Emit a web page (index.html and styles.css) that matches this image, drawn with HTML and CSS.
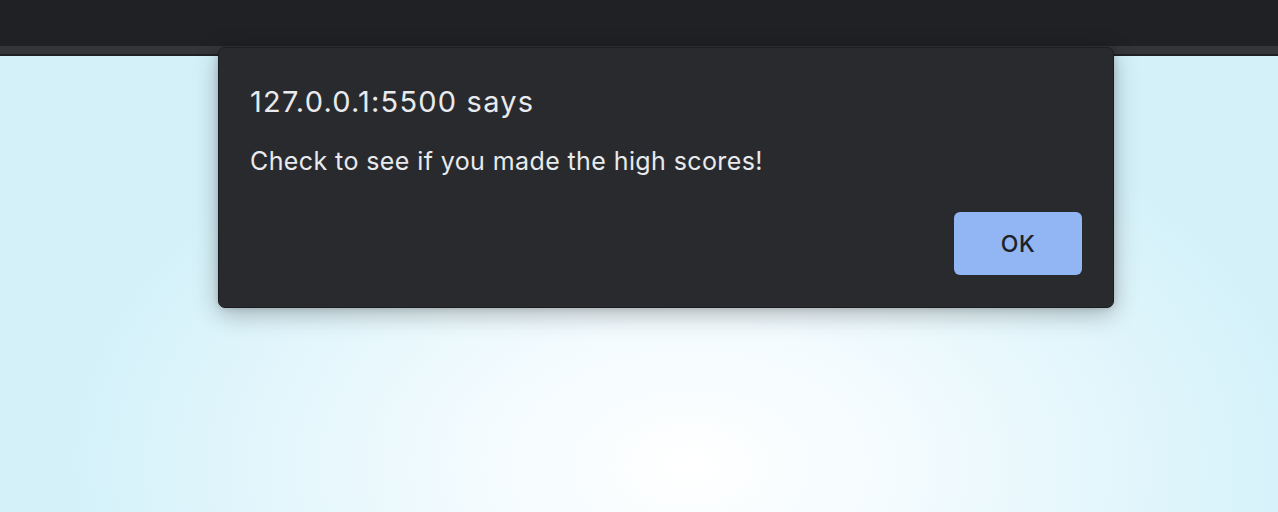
FILE: index.html
```html
<!DOCTYPE html>
<html>
<head>
<meta charset="utf-8">
<link rel="stylesheet" href="styles.css">
</head>
<body>
<div class="chrome">
  <div class="toolbar"></div>
  <div class="strip"></div>
</div>
<main class="page"></main>
<div class="dialog" role="alertdialog">
  <div class="title">127.0.0.1:5500 says</div>
  <div class="message">Check to see if you made the high scores!</div>
  <div class="actions"><button class="ok">OK</button></div>
</div>
</body>
</html>
```
FILE: styles.css
```css
html, body {
  margin: 0;
  padding: 0;
  height: 100%;
  overflow: hidden;
}
body {
  display: flex;
  flex-direction: column;
  font-family: Inter, "Noto Sans", sans-serif;
  background: #d6f2fa;
}
.chrome {
  flex: 0 0 auto;
}
.toolbar {
  height: 46px;
  background: #202124;
}
.strip {
  height: 8px;
  background: #35363a;
  border-bottom: 2px solid #1f2023;
}
.page {
  flex: 1 1 auto;
  background: radial-gradient(ellipse 620px 400px at 690px 410px, #ffffff 0%, #f3fbfe 35%, #e2f6fc 70%, #d4f1f9 100%);
}
.dialog {
  position: absolute;
  left: 218px;
  top: 47px;
  width: 896px;
  height: 261px;
  box-sizing: border-box;
  background: #292a2e;
  border: 1px solid #1c1d20;
  border-radius: 7px;
  box-shadow: 0 6px 24px rgba(0, 0, 0, 0.28), 0 0 6px rgba(0, 0, 0, 0.15);
  padding: 36px 31px 32px 31px;
  display: flex;
  flex-direction: column;
  color: #e8eaed;
}
.title {
  font-size: 29px;
  line-height: 36px;
  letter-spacing: 1.2px;
}
.message {
  margin-top: 26px;
  font-size: 25px;
  line-height: 30px;
  letter-spacing: 0.4px;
}
.actions {
  margin-top: auto;
  display: flex;
  justify-content: flex-end;
}
.ok {
  width: 128px;
  height: 63px;
  border: none;
  border-radius: 6px;
  background: #92b5f3;
  color: #202124;
  font-family: Inter, "Noto Sans", sans-serif;
  font-size: 23px;
  font-weight: 500;
  letter-spacing: 0.5px;
  padding: 0;
}
```
